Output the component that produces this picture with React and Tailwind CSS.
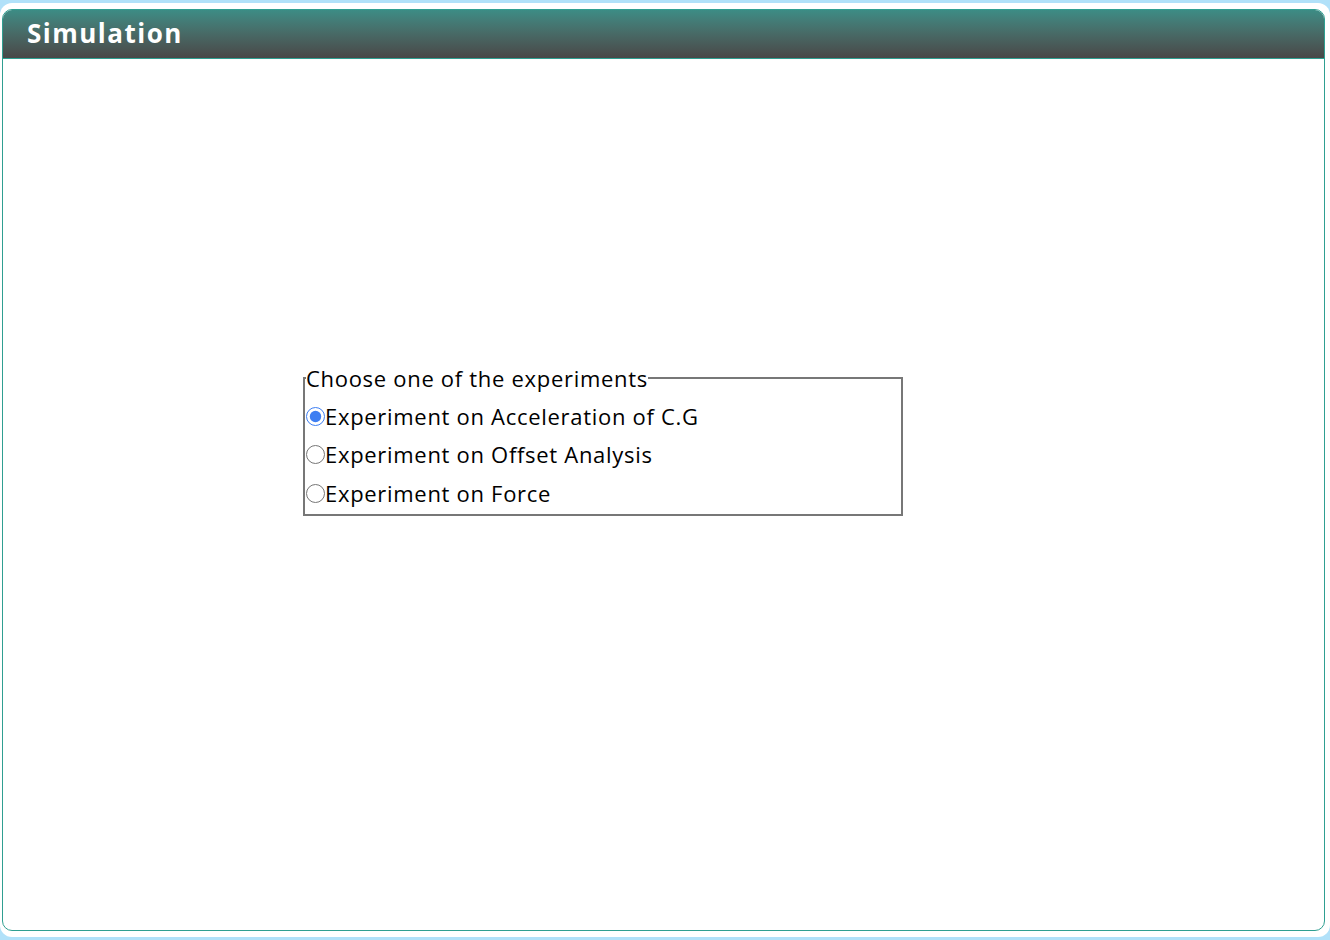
import React, { useState } from "react";

const options = [
  "Experiment on Acceleration of C.G",
  "Experiment on Offset Analysis",
  "Experiment on Force",
];

export default function App() {
  const [sel, setSel] = useState(0);
  return (
    <div className="w-[1330px] h-[940px] bg-[#b1e1f9] pt-[3px] pb-[3px] overflow-hidden" style={{ fontFamily: "'Open Sans', Lato, sans-serif" }}>
      <div className="h-full bg-white rounded-[12px] pl-[2px] pr-[5px] pt-[6px] pb-[6px]">
        <div className="h-full flex flex-col border border-[#2f9f91] rounded-[10px] overflow-hidden">
          <div className="h-[49px] shrink-0 flex items-center pl-[24px] pb-[3px] bg-gradient-to-b from-[#3c8c85] to-[#484848] border-b border-[#2f9f91]">
            <span className="text-white font-bold text-[26px] tracking-[1.5px] leading-none">Simulation</span>
          </div>
          <div className="flex-1 pl-[300px] pt-[304px]">
            <fieldset className="w-[600px] border-2 border-[#777777] p-0 m-0 text-black text-[22px] tracking-[0.7px]">
              <legend className="p-0 leading-[30px] ml-[1px]">Choose one of the experiments</legend>
              <div className="pt-[4px] pb-[1px] flex flex-col">
                {options.map((o, i) => (
                  <label key={o} className="h-[38.5px] flex items-center">
                    <input
                      type="radio"
                      name="exp"
                      checked={sel === i}
                      onChange={() => setSel(i)}
                      className="w-[19px] h-[19px] m-0 ml-[1px] accent-[#3d7ef2]"
                    />
                    <span>{o}</span>
                  </label>
                ))}
              </div>
            </fieldset>
          </div>
        </div>
      </div>
    </div>
  );
}
